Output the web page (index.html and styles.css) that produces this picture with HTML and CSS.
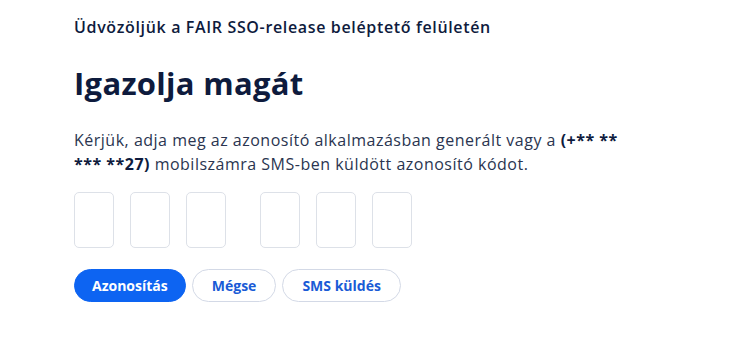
FILE: index.html
```html
<!DOCTYPE html>
<html lang="hu">
<head>
    <meta charset="UTF-8">
    <title>FAIR SSO</title>
    <link rel="stylesheet" href="styles.css">
</head>
<body>
    <div class="page">
        <p class="welcome">Üdvözöljük a FAIR SSO-release beléptető felületén</p>
        <h1 class="title">Igazolja magát</h1>
        <p class="intro">Kérjük, adja meg az azonosító alkalmazásban generált vagy a <b>(+** **<br>*** **27)</b> mobilszámra SMS-ben küldött azonosító kódot.</p>

        <div class="code">
            <div class="code-group">
                <input class="digit" type="text" maxlength="1">
                <input class="digit" type="text" maxlength="1">
                <input class="digit" type="text" maxlength="1">
            </div>
            <div class="code-group">
                <input class="digit" type="text" maxlength="1">
                <input class="digit" type="text" maxlength="1">
                <input class="digit" type="text" maxlength="1">
            </div>
        </div>

        <div class="actions">
            <button class="btn btn-primary">Azonosítás</button>
            <button class="btn btn-outline">Mégse</button>
            <button class="btn btn-outline">SMS küldés</button>
        </div>
    </div>
</body>
</html>
```

FILE: styles.css
```css
body {
    margin: 0;
    background: #fff;
    font-family: "Open Sans", sans-serif;
    color: #0e1b3d;
}
.page {
    padding: 17px 0 0 74px;
}
.welcome {
    margin: 0;
    font-size: 16px;
    font-weight: 600;
    line-height: 20px;
    letter-spacing: 0.65px;
}
.title {
    margin: 26px 0 0;
    font-size: 31px;
    font-weight: 700;
    line-height: 40px;
    letter-spacing: 0.3px;
}
.intro {
    margin: 25px 0 0;
    font-size: 16px;
    line-height: 24px;
    letter-spacing: 0.5px;
    color: #2a3550;
}
.intro b {
    color: #0e1b3d;
}
.code {
    display: flex;
    gap: 34px;
    margin-top: 16px;
}
.code-group {
    display: flex;
    gap: 16px;
}
.digit {
    width: 40px;
    height: 56px;
    box-sizing: border-box;
    border: 1px solid #dde1e8;
    border-radius: 5px;
    padding: 0;
    text-align: center;
    font-size: 20px;
}
.actions {
    display: flex;
    gap: 6px;
    margin-top: 21px;
}
.btn {
    height: 33px;
    padding: 0 19px;
    border-radius: 17px;
    font-family: inherit;
    font-size: 14px;
    font-weight: 700;
    cursor: pointer;
}
.btn-primary {
    padding: 0 17px;
    background: #0d64f2;
    border: 1px solid #0d64f2;
    color: #fff;
}
.btn-outline {
    background: #fff;
    border: 1px solid #d3d9e6;
    color: #1a5bd6;
}
```
